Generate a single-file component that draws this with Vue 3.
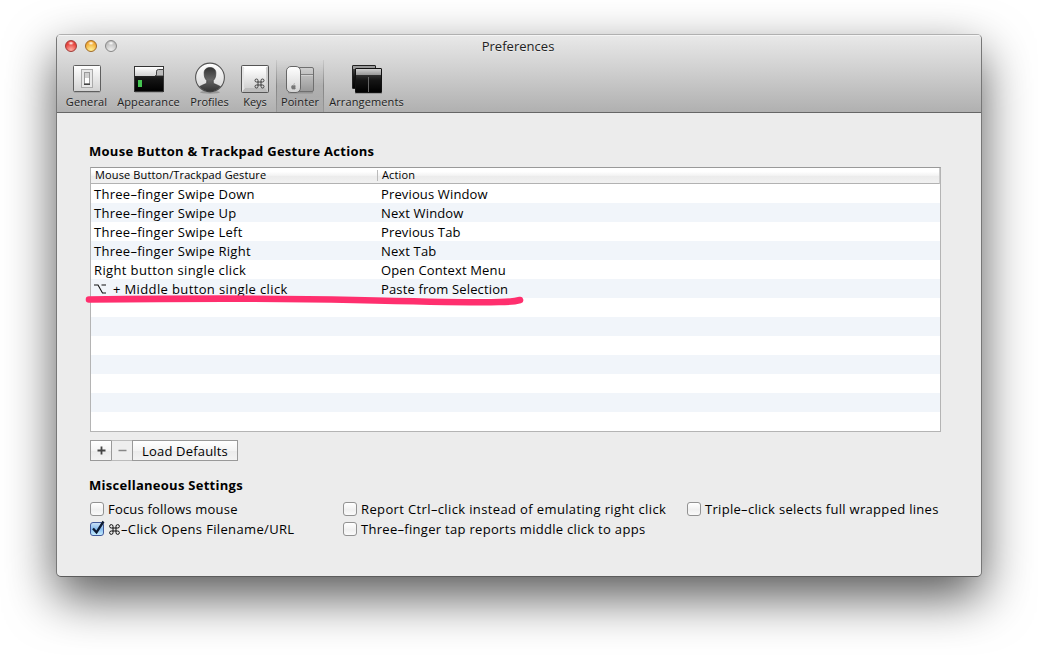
<script setup>
const tools = [
  { id: 'general', label: 'General' },
  { id: 'appearance', label: 'Appearance' },
  { id: 'profiles', label: 'Profiles' },
  { id: 'keys', label: 'Keys' },
  { id: 'pointer', label: 'Pointer' },
  { id: 'arrangements', label: 'Arrangements' },
]
const rows = [
  ['Three–finger Swipe Down', 'Previous Window'],
  ['Three–finger Swipe Up', 'Next Window'],
  ['Three–finger Swipe Left', 'Previous Tab'],
  ['Three–finger Swipe Right', 'Next Tab'],
  ['Right button single click', 'Open Context Menu'],
  ['+ Middle button single click', 'Paste from Selection', true],
  ...Array.from({ length: 7 }, () => ['', '']),
]
</script>

<template>
  <main class="desktop">
    <section class="window">
      <header class="head">
        <div class="titlebar">
          <i class="light red"></i><i class="light amber"></i><i class="light grey"></i>
          <h1>Preferences</h1>
        </div>
        <nav class="tools">
          <div v-for="t in tools" :key="t.id" class="tool" :class="t.id">
            <svg class="icon" width="34" height="34" viewBox="0 0 34 34">
              <defs>
                <linearGradient id="light" x1="0" y1="0" x2="0" y2="1"><stop offset="0" stop-color="#fff" /><stop offset="1" stop-color="#d2d2d2" /></linearGradient>
                <linearGradient id="mid" x1="0" y1="0" x2="0" y2="1"><stop offset="0" stop-color="#d0d0d0" /><stop offset="1" stop-color="#989898" /></linearGradient>
                <linearGradient id="dark" x1="0" y1="0" x2="0" y2="1"><stop offset="0" stop-color="#555" /><stop offset=".5" stop-color="#151515" /><stop offset="1" stop-color="#000" /></linearGradient>
                <linearGradient id="man" x1="0" y1="0" x2="0" y2="1"><stop offset="0" stop-color="#333" /><stop offset=".5" stop-color="#666" /><stop offset="1" stop-color="#333" /></linearGradient>
              </defs>
              <g v-if="t.id === 'general'">
                <rect x="4" y="31" width="26" height="2" fill="#666" opacity=".25" />
                <rect x="3.500" y="5.500" width="27" height="26" rx="1" fill="url(#light)" stroke="#5f5f5f" />
                <rect x="11.500" y="9.500" width="11" height="18" fill="#e8e8e8" stroke="#aaa" />
                <rect x="14.500" y="12.500" width="5" height="12" fill="#cfcfcf" stroke="#999" />
                <path d="M15 18h4v5h-4z" fill="#fff" /><path d="M14 23.500h6v1.500h-6z" fill="#444" />
              </g>
              <g v-else-if="t.id === 'appearance'">
                <rect x="3" y="31" width="28" height="2" fill="#555" opacity=".3" />
                <rect x="2.500" y="6.500" width="29" height="25" fill="url(#dark)" stroke="#333" />
                <path d="M3 7h28v3h-6l-1 2v4H3z" fill="url(#light)" />
                <path d="M31.500 9.500h-5q-2 0-2 2v3q0 1.500-1.500 1.500h8.500z" fill="#bbb" stroke="#444" />
                <path d="M2.500 16.500h29" stroke="#222" />
                <rect x="6" y="20" width="4" height="7" fill="#45c651" />
              </g>
              <g v-else-if="t.id === 'profiles'">
                <ellipse cx="17" cy="32.200" rx="10" ry="1.500" fill="#666" opacity=".45" />
                <circle cx="17" cy="17.500" r="14.400" fill="url(#light)" stroke="#555" stroke-width="1.100" />
                <path d="M17 7.500c-4 0-6.300 2.500-5.800 6.500c0 3 1 5 2.500 6.500v2.500c-1.200 1.300-4.500 1.700-7 3.500c3 3.600 6.500 5 10.300 5s7.500-1.400 10.300-5c-2.500-1.800-5.800-2.200-7-3.500V20.500c1.500-1.500 2.500-3.500 2.500-6.500C23.300 10 21 7.500 17 7.500z" fill="url(#man)" stroke="#333" stroke-width=".6" />
              </g>
              <g v-else-if="t.id === 'keys'">
                <rect x="3.500" y="5.500" width="27" height="27" rx="1" fill="#bdbdbd" stroke="#555" />
                <path d="M4 6h26l-3 3H7z" fill="#fff" /><path d="M4 6l3 3v19l-3 4z" fill="#e5e5e5" /><path d="M30 6l-3 3v19l3 4z" fill="#d0d0d0" />
                <rect x="6" y="8" width="22" height="20" rx="1" fill="url(#light)" />
                <path transform="translate(17 19)" d="M3 3H1.500A1.500 1.500 0 1 1 3 1.500V7.500A1.500 1.500 0 1 1 1.500 6H7.500A1.500 1.500 0 1 1 6 7.500V1.500A1.500 1.500 0 1 1 7.500 3H3" fill="none" stroke="#333" stroke-width=".9" />
              </g>
              <g v-else-if="t.id === 'pointer'">
                <rect x="5" y="31" width="25" height="2.500" rx="1" fill="#444" opacity=".25" />
                <rect x="14.500" y="7.500" width="16" height="24" rx="1.500" fill="url(#mid)" stroke="#6f6f6f" />
                <path d="M15 14.500h15" stroke="#808080" /><path d="M15 15.500h15" stroke="#ddd" opacity=".6" />
                <rect x="3.500" y="6.500" width="14" height="26" rx="4.500" fill="url(#light)" stroke="#666" />
                <path d="M10.500 25.500c1-.6 2.200-.1 2.200.7c-.7.600-.5 1.500.2 1.900c-.5 1.200-1.200 1.700-2.200 1.200c-1.200.6-2.500-.5-2.500-2.300c0-1.300 1.100-2 2.300-1.500zM10.500 25q0-1.400 1.200-1.700q.1 1.300-1.200 1.700" fill="#777" />
              </g>
              <g v-else>
                <rect x="5" y="32" width="27" height="2" fill="#444" opacity=".3" />
                <rect x="2.500" y="5.500" width="23" height="23" rx=".5" fill="url(#dark)" stroke="#222" />
                <path d="M3 6h22v3H3z" fill="#999" />
                <rect x="5.500" y="8.500" width="26" height="24" rx=".5" fill="url(#dark)" stroke="#111" />
                <path d="M6 9h25v6H6z" fill="url(#mid)" /><path d="M18.500 17v15" stroke="#666" />
              </g>
            </svg>
            <span>{{ t.label }}</span>
          </div>
        </nav>
      </header>

      <div class="body">
        <h2 class="h-actions">Mouse Button &amp; Trackpad Gesture Actions</h2>
        <div class="table">
          <div class="thead"><span class="c1">Mouse Button/Trackpad Gesture</span><span class="c2">Action</span></div>
          <div v-for="(r, i) in rows" :key="i" class="row">
            <span class="c1"><svg v-if="r[2]" class="opt" width="13" height="10" viewBox="0 0 13 10"><path d="M0 1h4l4.500 8H12M7.500 1H12" fill="none" stroke="#111" stroke-width="1.100" /></svg><b :class="{ wide: i > 3 }">{{ r[0] }}</b></span>
            <span class="c2"><b>{{ r[1] }}</b></span>
          </div>
          <svg class="mark" width="440" height="16" viewBox="0 0 440 16"><path d="M5 6.500C90 5.500 210 5.500 270 7S400 9.500 415 9Q429 9 436 7" fill="none" stroke="#ff2f6e" stroke-width="6.600" stroke-linecap="round" stroke-linejoin="round" /></svg>
        </div>
        <div class="buttons">
          <button><svg width="9" height="9"><path d="M4.500 .5v8M.5 4.500h8" stroke="#444" stroke-width="1.800" /></svg></button>
          <button class="off"><svg width="9" height="9"><path d="M.5 4.500h8" stroke="#888" stroke-width="1.500" /></svg></button>
          <button class="load"><span>Load Defaults</span></button>
        </div>
        <h2 class="h-misc">Miscellaneous Settings</h2>
        <div class="checks">
          <label><i class="box"></i><span class="focus">Focus follows mouse</span></label>
          <label><i class="box"></i><span class="report">Report Ctrl–click instead of emulating right click</span></label>
          <label><i class="box"></i><span>Triple–click selects full wrapped lines</span></label>
          <label><i class="box on"><svg width="16" height="16" viewBox="0 0 16 16"><path d="M3 8.500L6.500 12.300L13.500 1.500" fill="none" stroke="#0d1a33" stroke-width="2.300" /></svg></i><span class="url"><svg class="cmd" width="11" height="11" viewBox="0 0 11 11"><path d="M4 4H2.300A1.700 1.700 0 1 1 4 2.300V8.700A1.700 1.700 0 1 1 2.300 7H8.700A1.700 1.700 0 1 1 7 8.700V2.300A1.700 1.700 0 1 1 8.700 4H4" fill="none" stroke="#111" /></svg>–Click Opens Filename/URL</span></label>
          <label><i class="box"></i><span>Three–finger tap reports middle click to apps</span></label>
        </div>
      </div>
    </section>
  </main>
</template>

<style>
html, body { margin: 0; background: #fff; overflow: hidden; }
</style>

<style scoped>
* { box-sizing: border-box; }
.desktop { width: 1038px; height: 655px; padding: 34px 56px 0; overflow: hidden; font: 13px/19px "Open Sans", "Noto Sans", sans-serif; color: #000; font-variant-ligatures: none; }
.window { width: 926px; height: 543px; border: 1px solid #777; border-top-color: #b0b0b0; border-bottom-color: #5c5c5c; border-radius: 5px; overflow: hidden; background: #ececec; background-clip: padding-box; box-shadow: 0 20px 50px rgba(0, 0, 0, .66); }
.head { height: 78px; border-bottom: 1px solid #666; background: linear-gradient(#e9e9e9, #d0d0d0 45%, #b0b0b0); box-shadow: inset 0 1px #f5f5f5; }
.titlebar { position: relative; height: 25px; display: flex; gap: 8px; padding: 5px 0 0 8px; }
.light { width: 12px; height: 12px; border-radius: 50%; border: 1px solid #777; }
.red { border-color: #a03b38; background: radial-gradient(ellipse 3px 2px at 50% 22%, #fff, transparent), radial-gradient(circle at 50% 90%, #ffb0a6, #e8433d 65%); }
.amber { border-color: #a06a27; background: radial-gradient(ellipse 3px 2px at 50% 22%, #fff, transparent), radial-gradient(circle at 50% 90%, #fff29a, #f0a42c 75%); }
.grey { border-color: #888; background: radial-gradient(ellipse 3px 2px at 50% 22%, #fff, transparent), radial-gradient(circle at 50% 90%, #eee, #bcbcbc 75%); }
h1 { position: absolute; left: 0; right: 2px; top: 2px; margin: 0; text-align: center; font-size: 13px; line-height: 19px; font-weight: 400; color: #222; letter-spacing: .03px; text-shadow: 0 1px rgba(255, 255, 255, .4); }
.tools { display: flex; height: 52px; padding-left: 4px; }
.tool { display: flex; flex-direction: column; align-items: center; font-size: 11px; line-height: 14px; color: #222; white-space: nowrap; text-shadow: 0 1px rgba(255, 255, 255, .3); }
.icon { display: block; flex: none; margin-bottom: 1px; }
.general { width: 51px; } .appearance { width: 73px; } .profiles { width: 49px; } .keys { width: 42px; } .arrangements { width: 85px; }
.pointer { width: 48px; border: solid #8b8b8b; border-width: 0 1px; background: linear-gradient(rgba(0, 0, 0, 0), rgba(0, 0, 0, .1) 50%, rgba(0, 0, 0, .04)); border-image: linear-gradient(#ccc, #858585 50%, #999) 1; }
.tool span { letter-spacing: .12px; }
.profiles span, .keys span { letter-spacing: 0; }
.body { padding: 28px 40px 0 33px; }
h2 { margin: 0; font-size: 13px; line-height: 20px; font-weight: 700; margin-left: -1px; letter-spacing: .27px; }
h2, .row, label, .load { white-space: nowrap; }
.table { position: relative; width: 851px; height: 265px; margin-top: 6px; border: 1px solid #b4b4b4; border-top-color: #999; background: #fff; }
.thead { display: flex; height: 16px; border-bottom: 1px solid #b2b2b2; background: linear-gradient(#fff 0 25%, #f3f3f3 50%, #ececec 55%, #f1f1f1); font-size: 11px; line-height: 14px; border-right: 1px solid #ccc; letter-spacing: .13px; }
.c1 { width: 287px; padding-left: 3px; display: flex; align-items: flex-start; flex: none; }
.c2 { padding-left: 3px; }
.thead .c1 { display: block; padding-left: 4px; background: linear-gradient(#bbb, #bbb) right 2px / 1px 11px no-repeat; }
.thead .c2 { padding-left: 4px; }
.row { display: flex; height: 19px; line-height: 21px; }
.row:nth-child(odd) { background: #f1f5fa; }
.row b { font-weight: 400; letter-spacing: .27px; }
.row .c2 b { letter-spacing: .14px; }
.row .wide { letter-spacing: .37px; }
.opt { margin: 5px 6px 0 0; }
.mark { position: absolute; left: -7px; top: 125px; }
.buttons { display: flex; margin-top: 8px; }
button { font: inherit; color: #000; height: 21px; width: 21px; padding: 0; border: 1px solid #999; border-right-width: 0; background: linear-gradient(#fff, #f4f4f4 50%, #ebebeb 51%, #f3f3f3); display: flex; align-items: center; justify-content: center; }
.off { background: #eee; border-color: #bbb; border-left-color: #999; }
.load { width: 106px; border-right-width: 1px; letter-spacing: .18px; }
.load span { position: relative; top: 1px; }
.h-misc { margin-top: 14px; }
.checks { display: grid; grid-template-columns: 253px 344px auto; grid-auto-rows: 20px; margin-top: 4px; }
label { display: flex; align-items: center; letter-spacing: .3px; }
.focus { letter-spacing: .2px; }
.report { letter-spacing: .37px; }
.url { letter-spacing: .35px; }
.box { position: relative; width: 14px; height: 14px; flex: none; margin-right: 4px; border: 1px solid #929292; border-radius: 3px; background: linear-gradient(#fff, #f0f0f0 55%, #fafafa); }
.on { border-color: #41599b; background: linear-gradient(#c9e0f7, #86bbee 50%, #c5edff); }
.on svg { position: absolute; left: -1px; top: -3px; }
.cmd { vertical-align: -1px; margin: 0 1px; }
</style>
